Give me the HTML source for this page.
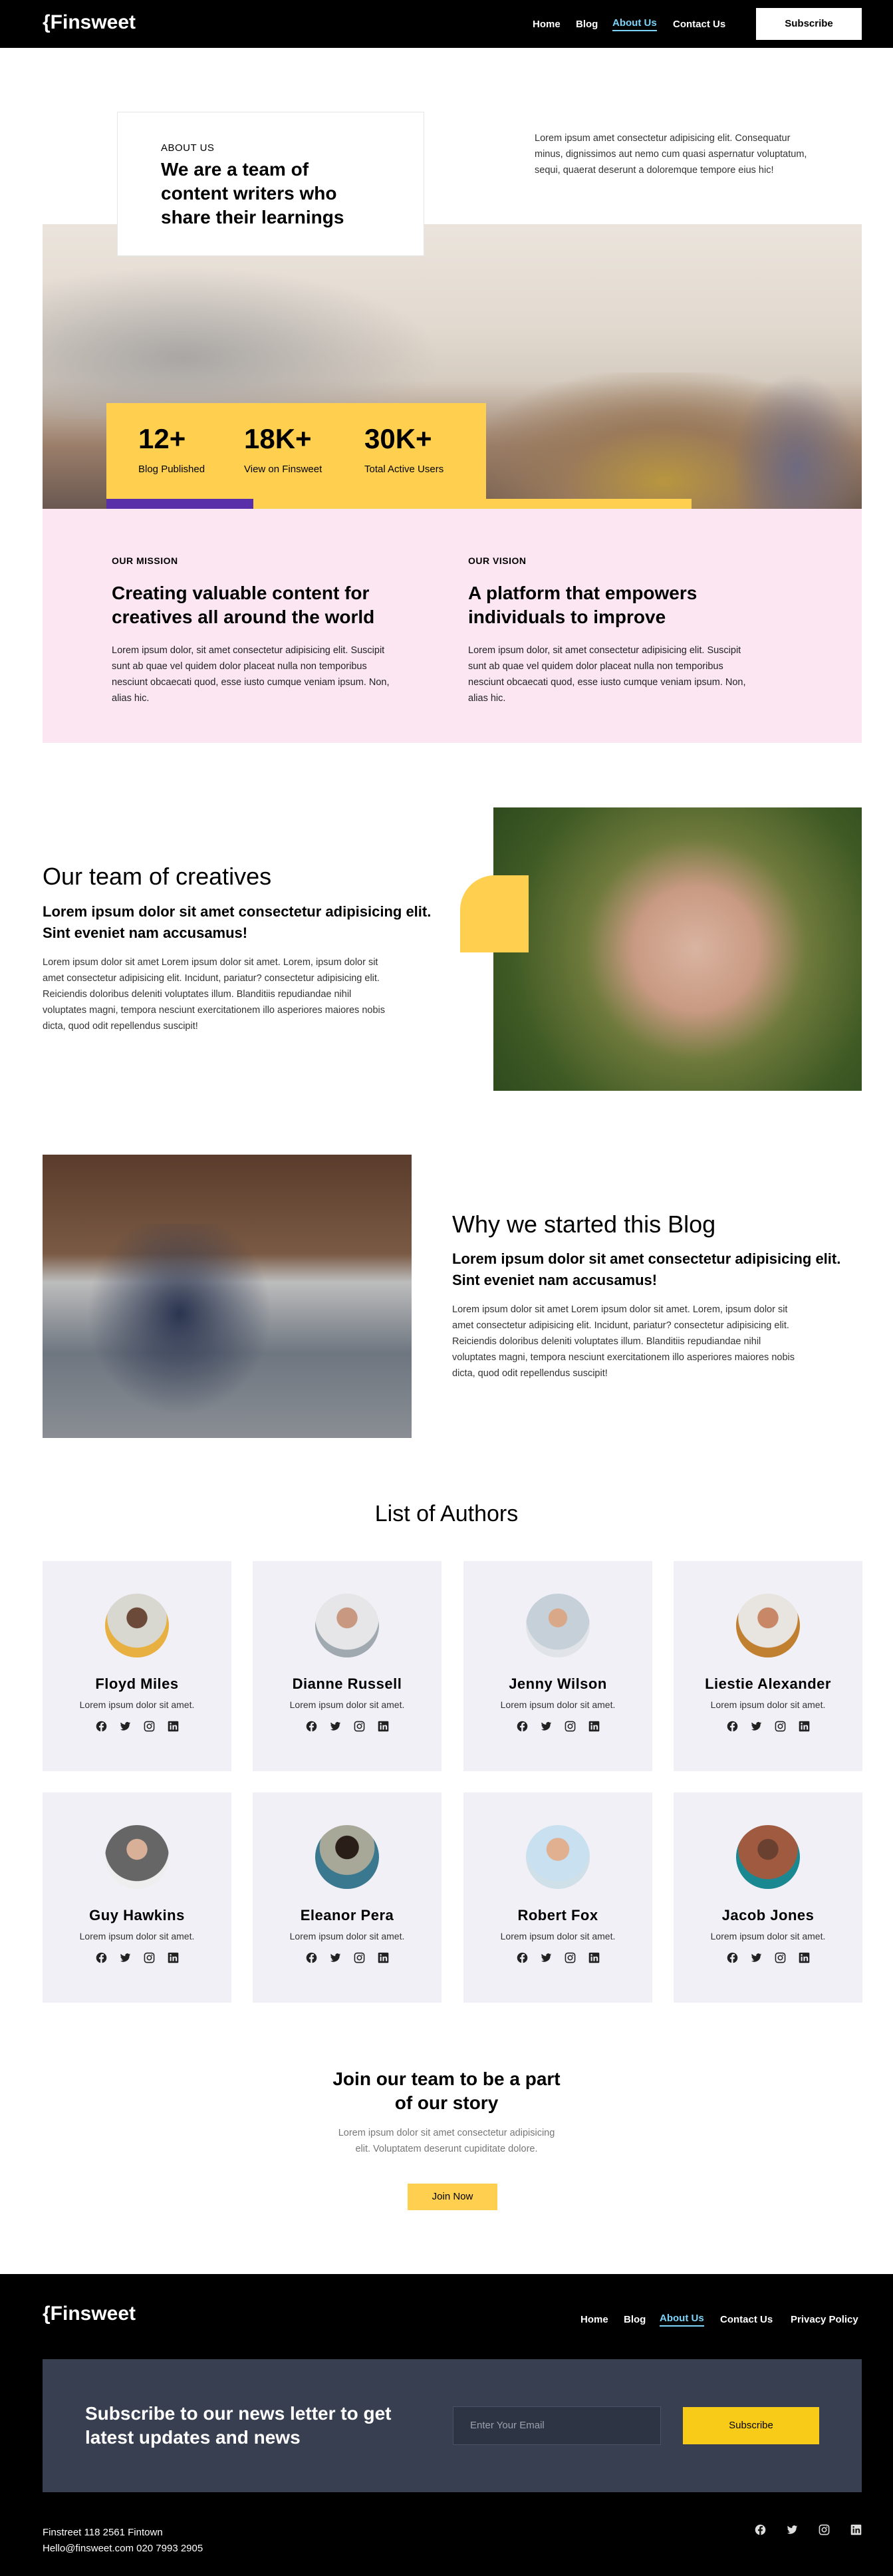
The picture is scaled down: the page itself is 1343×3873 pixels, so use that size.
<!DOCTYPE html>
<html><head><meta charset="utf-8"><style>
*{margin:0;padding:0;box-sizing:border-box}
body{width:1343px;height:3873px;position:relative;font-family:"Liberation Sans",sans-serif;color:#000;background:#fff;overflow:hidden}
.a{position:absolute}
.nav a{color:#fff;font-size:15px;font-weight:bold;text-decoration:none;position:absolute}
.p{font-size:15px;line-height:24px;color:#333}
.card{position:absolute;width:284px;height:316px;background:#f2f0f7;text-align:center}
.av{width:96px;height:96px;border-radius:50%;margin:49px auto 0;}
.card h3{font-size:22px;font-weight:bold;margin-top:27px;letter-spacing:.5px}
.card p{font-size:14px;color:#333;margin-top:10px}
.ic{display:flex;justify-content:center;gap:19px;margin-top:16px}
.ic svg{width:17px;height:17px}
</style></head><body>
<svg width="0" height="0" style="position:absolute"><defs>
<symbol id="fb" viewBox="0 0 24 24"><circle cx="12" cy="12" r="11" fill="#222"/><path d="M13.5 24V14.5h3l.5-3.5h-3.5V9c0-1 .4-1.7 1.8-1.7H17V4.2c-.4 0-1.5-.2-2.7-.2-2.6 0-4.3 1.6-4.3 4.5V11H7v3.5h3V24z" fill="#f2f0f7"/></symbol>
<symbol id="tw" viewBox="0 0 24 24"><path d="M23 5c-.8.4-1.7.6-2.6.7.9-.6 1.6-1.4 2-2.5-.9.5-1.900.9-2.9 1.1a4.5 4.5 0 0 0-7.7 4.1C8 8.2 4.7 6.4 2.5 3.7c-1.2 2-.6 4.6 1.4 6-.7 0-1.4-.2-2-.6 0 2.2 1.5 4 3.6 4.5-.7.2-1.4.2-2 .1.6 1.8 2.3 3.1 4.2 3.1A9 9 0 0 1 1 18.600 12.8 12.8 0 0 0 20.7 7.2c.9-.6 1.7-1.4 2.3-2.2z" fill="#222"/></symbol>
<symbol id="ig" viewBox="0 0 24 24"><rect x="2" y="2" width="20" height="20" rx="5" fill="none" stroke="#222" stroke-width="2.2"/><circle cx="12" cy="12" r="4.5" fill="none" stroke="#222" stroke-width="2.2"/><circle cx="17.5" cy="6.5" r="1.3" fill="#222"/></symbol>
<symbol id="li" viewBox="0 0 24 24"><rect x="1" y="1" width="22" height="22" rx="2" fill="#222"/><rect x="5" y="9.5" width="3" height="9.5" fill="#f2f0f7"/><circle cx="6.5" cy="6" r="1.8" fill="#f2f0f7"/><path d="M10.5 9.5h2.9v1.4c.5-.9 1.6-1.6 3.1-1.6 2.9 0 3.5 1.8 3.5 4.3V19h-3v-4.8c0-1.200-.1-2.5-1.6-2.5s-1.9 1.2-1.9 2.4V19h-3z" fill="#f2f0f7"/></symbol>
</defs></svg>

<!-- header -->
<div class="a" style="left:0;top:0;width:1343px;height:72px;background:#000"></div>
<div class="a" style="left:64px;top:17px;color:#fff;font-size:30px;font-weight:bold">{Finsweet</div>
<div class="nav">
<a style="left:801px;top:28px">Home</a><a style="left:866px;top:28px">Blog</a>
<a style="left:921px;top:26px;color:#7dd3f8;border-bottom:2px solid #7dd3f8;padding-bottom:2px">About Us</a>
<a style="left:1012px;top:28px">Contact Us</a></div>
<div class="a" style="left:1137px;top:12px;width:159px;height:48px;background:#fff;text-align:center;line-height:48px;font-size:15px;font-weight:bold">Subscribe</div>

<!-- hero -->
<div class="a" style="left:64px;top:337px;width:1232px;height:428px;background:linear-gradient(180deg,#ebe4dc 0%,#e2dad0 35%,#d6ccc0 55%,#9a7e6a 78%,#6a5850 100%)"></div>
<div class="a" style="left:64px;top:400px;width:600px;height:230px;background:radial-gradient(ellipse at 35% 60%,#a9a6a4,rgba(180,176,172,0) 70%)"></div>
<div class="a" style="left:700px;top:560px;width:596px;height:205px;background:radial-gradient(ellipse at 50% 80%,#b89640 0,#9a7a5a 35%,rgba(120,100,100,0) 75%)"></div>
<div class="a" style="left:1100px;top:560px;width:196px;height:205px;background:radial-gradient(ellipse at 50% 70%,#6e6a80,rgba(110,106,128,0) 70%)"></div>
<div class="a" style="left:176px;top:168px;width:462px;height:217px;background:#fff;border:1px solid #e6e6e6;padding:45px 0 0 65px">
<div style="font-size:15px;letter-spacing:.5px">ABOUT US</div>
<div style="font-size:28px;font-weight:bold;line-height:36px;margin-top:6px">We are a team of<br>content writers who<br>share their learnings</div></div>
<div class="a p" style="left:804px;top:196px;width:480px;font-size:14.5px">Lorem ipsum amet consectetur adipisicing elit. Consequatur<br>minus, dignissimos aut nemo cum quasi aspernatur voluptatum,<br>sequi, quaerat deserunt a doloremque tempore eius hic!</div>
<div class="a" style="left:160px;top:606px;width:571px;height:159px;background:#ffd050"></div>
<div class="a" style="left:160px;top:750px;width:880px;height:15px;background:#ffd050"></div>
<div class="a" style="left:160px;top:750px;width:221px;height:15px;background:#592ea9"></div>
<div class="a" style="left:208px;top:636px;font-size:42px;font-weight:bold">12+</div>
<div class="a" style="left:367px;top:636px;font-size:42px;font-weight:bold">18K+</div>
<div class="a" style="left:548px;top:636px;font-size:42px;font-weight:bold">30K+</div>
<div class="a" style="left:208px;top:697px;font-size:15px">Blog Published</div>
<div class="a" style="left:367px;top:697px;font-size:15px">View on Finsweet</div>
<div class="a" style="left:548px;top:697px;font-size:15px">Total Active Users</div>

<!-- mission -->
<div class="a" style="left:64px;top:765px;width:1232px;height:352px;background:#fce6f1"></div>
<div class="a" style="left:168px;top:835px;font-size:14px;font-weight:bold;letter-spacing:.5px">OUR MISSION</div>
<div class="a" style="left:704px;top:835px;font-size:14px;font-weight:bold;letter-spacing:.5px">OUR VISION</div>
<div class="a" style="left:168px;top:874px;font-size:28px;font-weight:bold;line-height:36px;width:500px">Creating valuable content for<br>creatives all around the world</div>
<div class="a" style="left:704px;top:874px;font-size:28px;font-weight:bold;line-height:36px;width:500px">A platform that empowers<br>individuals to improve</div>
<div class="a p" style="left:168px;top:966px;width:495px;color:#222;font-size:14.5px">Lorem ipsum dolor, sit amet consectetur adipisicing elit. Suscipit<br>sunt ab quae vel quidem dolor placeat nulla non temporibus<br>nesciunt obcaecati quod, esse iusto cumque veniam ipsum. Non,<br>alias hic.</div>
<div class="a p" style="left:704px;top:966px;width:495px;color:#222;font-size:14.5px">Lorem ipsum dolor, sit amet consectetur adipisicing elit. Suscipit<br>sunt ab quae vel quidem dolor placeat nulla non temporibus<br>nesciunt obcaecati quod, esse iusto cumque veniam ipsum. Non,<br>alias hic.</div>

<!-- team -->
<div class="a" style="left:742px;top:1214px;width:554px;height:426px;background:radial-gradient(circle at 55% 50%,#d9b4a0 0,#c99a83 25%,#6f7a3c 45%,#3f5a24 75%,#2f4a1e 100%)"></div>
<div class="a" style="left:692px;top:1316px;width:103px;height:116px;background:#ffd050;border-top-left-radius:52px"></div>
<div class="a" style="left:64px;top:1297px;font-size:36px">Our team of creatives</div>
<div class="a" style="left:64px;top:1355px;font-size:22px;font-weight:bold;line-height:32px;width:640px">Lorem ipsum dolor sit amet consectetur adipisicing elit.<br>Sint eveniet nam accusamus!</div>
<div class="a p" style="left:64px;top:1435px;width:620px;font-size:14.5px">Lorem ipsum dolor sit amet Lorem ipsum dolor sit amet. Lorem, ipsum dolor sit<br>amet consectetur adipisicing elit. Incidunt, pariatur? consectetur adipisicing elit.<br>Reiciendis doloribus deleniti voluptates illum. Blanditiis repudiandae nihil<br>voluptates magni, tempora nesciunt exercitationem illo asperiores maiores nobis<br>dicta, quod odit repellendus suscipit!</div>

<!-- why -->
<div class="a" style="left:64px;top:1736px;width:555px;height:426px;background:linear-gradient(180deg,#5a3c2c 0%,#7a5a44 35%,#bdbdbd 45%,#6e7680 70%,#8a8e94 100%)"></div>
<div class="a" style="left:120px;top:1840px;width:300px;height:300px;background:radial-gradient(ellipse at 50% 45%,#2b3550,rgba(40,50,80,0) 65%)"></div>
<div class="a" style="left:680px;top:1820px;font-size:36px">Why we started this Blog</div>
<div class="a" style="left:680px;top:1877px;font-size:22px;font-weight:bold;line-height:32px;width:660px">Lorem ipsum dolor sit amet consectetur adipisicing elit.<br>Sint eveniet nam accusamus!</div>
<div class="a p" style="left:680px;top:1957px;width:640px;font-size:14.5px">Lorem ipsum dolor sit amet Lorem ipsum dolor sit amet. Lorem, ipsum dolor sit<br>amet consectetur adipisicing elit. Incidunt, pariatur? consectetur adipisicing elit.<br>Reiciendis doloribus deleniti voluptates illum. Blanditiis repudiandae nihil<br>voluptates magni, tempora nesciunt exercitationem illo asperiores maiores nobis<br>dicta, quod odit repellendus suscipit!</div>

<div class="a" style="left:0;top:2257px;width:1343px;text-align:center;font-size:34px">List of Authors</div>

<div class="card" style="left:64px;top:2347px"><div class="av" style="background:radial-gradient(circle at 50% 38%,#6b4a3a 0 20%,#d8d8d0 21% 58%,#e8b040 59%)"></div><h3>Floyd Miles</h3><p>Lorem ipsum dolor sit amet.</p><div class="ic"><svg><use href="#fb"/></svg><svg><use href="#tw"/></svg><svg><use href="#ig"/></svg><svg><use href="#li"/></svg></div></div>
<div class="card" style="left:380px;top:2347px"><div class="av" style="background:radial-gradient(circle at 50% 38%,#c89880 0 20%,#e6e6e8 21% 62%,#a0a8b0 63%)"></div><h3>Dianne Russell</h3><p>Lorem ipsum dolor sit amet.</p><div class="ic"><svg><use href="#fb"/></svg><svg><use href="#tw"/></svg><svg><use href="#ig"/></svg><svg><use href="#li"/></svg></div></div>
<div class="card" style="left:697px;top:2347px"><div class="av" style="background:radial-gradient(circle at 50% 38%,#d8a888 0 18%,#c6d0d8 19% 62%,#e0e4e8 63%)"></div><h3>Jenny Wilson</h3><p>Lorem ipsum dolor sit amet.</p><div class="ic"><svg><use href="#fb"/></svg><svg><use href="#tw"/></svg><svg><use href="#ig"/></svg><svg><use href="#li"/></svg></div></div>
<div class="card" style="left:1013px;top:2347px"><div class="av" style="background:radial-gradient(circle at 50% 38%,#c88868 0 20%,#e8e4e0 21% 58%,#c08030 59%)"></div><h3>Liestie Alexander</h3><p>Lorem ipsum dolor sit amet.</p><div class="ic"><svg><use href="#fb"/></svg><svg><use href="#tw"/></svg><svg><use href="#ig"/></svg><svg><use href="#li"/></svg></div></div>
<div class="card" style="left:64px;top:2695px"><div class="av" style="background:radial-gradient(circle at 50% 38%,#d8b098 0 20%,#666 21% 62%,#eee 63%)"></div><h3>Guy Hawkins</h3><p>Lorem ipsum dolor sit amet.</p><div class="ic"><svg><use href="#fb"/></svg><svg><use href="#tw"/></svg><svg><use href="#ig"/></svg><svg><use href="#li"/></svg></div></div>
<div class="card" style="left:380px;top:2695px"><div class="av" style="background:radial-gradient(circle at 50% 35%,#2a1e18 0 22%,#a8a898 23% 52%,#3a7890 53%)"></div><h3>Eleanor Pera</h3><p>Lorem ipsum dolor sit amet.</p><div class="ic"><svg><use href="#fb"/></svg><svg><use href="#tw"/></svg><svg><use href="#ig"/></svg><svg><use href="#li"/></svg></div></div>
<div class="card" style="left:697px;top:2695px"><div class="av" style="background:radial-gradient(circle at 50% 38%,#e0b090 0 22%,#c8e0f0 23% 62%,#d0e0e8 63%)"></div><h3>Robert Fox</h3><p>Lorem ipsum dolor sit amet.</p><div class="ic"><svg><use href="#fb"/></svg><svg><use href="#tw"/></svg><svg><use href="#ig"/></svg><svg><use href="#li"/></svg></div></div>
<div class="card" style="left:1013px;top:2695px"><div class="av" style="background:radial-gradient(circle at 50% 38%,#6a4030 0 20%,#a05a40 21% 58%,#1a8890 59%)"></div><h3>Jacob Jones</h3><p>Lorem ipsum dolor sit amet.</p><div class="ic"><svg><use href="#fb"/></svg><svg><use href="#tw"/></svg><svg><use href="#ig"/></svg><svg><use href="#li"/></svg></div></div>

<!-- join -->
<div class="a" style="left:0;top:3108px;width:1343px;text-align:center;font-size:28px;font-weight:bold;line-height:36px">Join our team to be a part<br>of our story</div>
<div class="a" style="left:0;top:3195px;width:1343px;text-align:center;font-size:14.5px;line-height:24px;color:#777">Lorem ipsum dolor sit amet consectetur adipisicing<br>elit. Voluptatem deserunt cupiditate dolore.</div>
<div class="a" style="left:613px;top:3283px;width:135px;height:40px;background:#ffd050;text-align:center;line-height:40px;font-size:15px">Join Now</div>

<!-- footer -->
<div class="a" style="left:0;top:3419px;width:1343px;height:454px;background:#000"></div>
<div class="a" style="left:64px;top:3462px;color:#fff;font-size:30px;font-weight:bold">{Finsweet</div>
<div class="nav">
<a style="left:873px;top:3479px">Home</a><a style="left:938px;top:3479px">Blog</a>
<a style="left:992px;top:3477px;color:#7dd3f8;border-bottom:2px solid #7dd3f8;padding-bottom:2px">About Us</a>
<a style="left:1083px;top:3479px">Contact Us</a><a style="left:1189px;top:3479px">Privacy Policy</a></div>
<div class="a" style="left:64px;top:3547px;width:1232px;height:200px;background:#383f50"></div>
<div class="a" style="left:128px;top:3611px;color:#fff;font-size:28px;font-weight:bold;line-height:36px">Subscribe to our news letter to get<br>latest updates and news</div>
<div class="a" style="left:681px;top:3618px;width:313px;height:58px;background:#2d3444;border:1px solid #4a5264;color:#9aa0ac;font-size:15px;line-height:56px;padding-left:25px">Enter Your Email</div>
<div class="a" style="left:1027px;top:3619px;width:205px;height:56px;background:#f9cb19;text-align:center;line-height:56px;font-size:15px">Subscribe</div>
<div class="a" style="left:64px;top:3796px;color:#fff;font-size:15px;line-height:24px">Finstreet 118 2561 Fintown<br>Hello@finsweet.com 020 7993 2905</div>
<div class="a" style="left:1135px;top:3795px;display:flex;gap:31px;filter:invert(1)">
<svg width="17" height="17"><use href="#fb"/></svg><svg width="17" height="17"><use href="#tw"/></svg><svg width="17" height="17"><use href="#ig"/></svg><svg width="17" height="17"><use href="#li"/></svg></div>
</body></html>
